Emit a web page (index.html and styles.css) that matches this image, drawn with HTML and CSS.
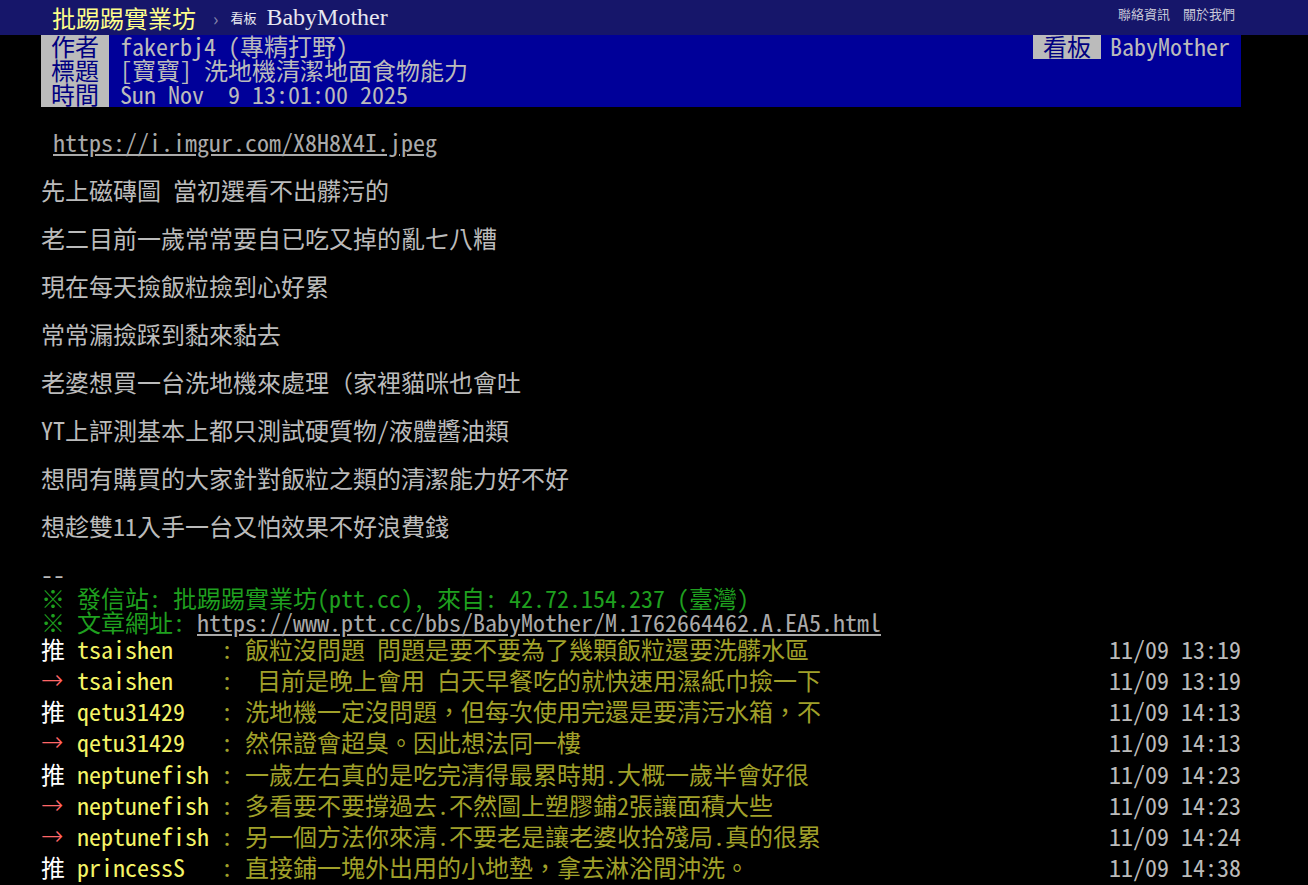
FILE: index.html
```html
<!DOCTYPE html>
<html lang="zh-Hant-TW">
<head>
    <meta charset="UTF-8">
    <title>[寶寶] 洗地機清潔地面食物能力 - 看板 BabyMother - 批踢踢實業坊</title>
    <link rel="stylesheet" href="styles.css">
</head>
<body>

<div class="topbar-container">
    <div class="topbar">
        <a class="logo" href="#">批踢踢實業坊</a>
        <span class="sep">›</span>
        <a class="board" href="#"><span class="board-label">看板</span>BabyMother</a>
        <div class="top-links">
            <a href="#">聯絡資訊</a>
            <a href="#">關於我們</a>
        </div>
    </div>
</div>

<div class="main-content bbs">
    <div class="meta">
        <div class="meta-left">
            <div class="metaline"><span class="meta-tag">作者</span><span class="meta-value">fakerbj4 (專精打野)</span></div>
            <div class="metaline"><span class="meta-tag">標題</span><span class="meta-value">[寶寶] 洗地機清潔地面食物能力</span></div>
            <div class="metaline"><span class="meta-tag">時間</span><span class="meta-value">Sun Nov  9 13:01:00 2025</span></div>
        </div>
        <div class="metaline meta-right"><span class="meta-tag">看板</span><span class="meta-value">BabyMother</span></div>
    </div>

    <div class="article-body"> <a href="#">https://i.imgur.com/X8H8X4I.jpeg</a>

先上磁磚圖 當初選看不出髒污的

老二目前一歲常常要自已吃又掉的亂七八糟

現在每天撿飯粒撿到心好累

常常漏撿踩到黏來黏去

老婆想買一台洗地機來處理（家裡貓咪也會吐

YT上評測基本上都只測試硬質物/液體醬油類

想問有購買的大家針對飯粒之類的清潔能力好不好

想趁雙11入手一台又怕效果不好浪費錢

--
<span class="f2">※ 發信站: 批踢踢實業坊(ptt.cc), 來自: 42.72.154.237 (臺灣)</span>
<span class="f2">※ 文章網址: </span><a href="#">https://www.ptt.cc/bbs/BabyMother/M.1762664462.A.EA5.html</a></div>

    <div class="push"><span class="push-tag">推</span><span class="push-userid">tsaishen</span><span class="push-content">: 飯粒沒問題 問題是要不要為了幾顆飯粒還要洗髒水區</span><span class="push-time">11/09 13:19</span></div>
    <div class="push"><span class="push-tag arrow">→</span><span class="push-userid">tsaishen</span><span class="push-content">:  目前是晚上會用 白天早餐吃的就快速用濕紙巾撿一下</span><span class="push-time">11/09 13:19</span></div>
    <div class="push"><span class="push-tag">推</span><span class="push-userid">qetu31429</span><span class="push-content">: 洗地機一定沒問題，但每次使用完還是要清污水箱，不</span><span class="push-time">11/09 14:13</span></div>
    <div class="push"><span class="push-tag arrow">→</span><span class="push-userid">qetu31429</span><span class="push-content">: 然保證會超臭。因此想法同一樓</span><span class="push-time">11/09 14:13</span></div>
    <div class="push"><span class="push-tag">推</span><span class="push-userid">neptunefish</span><span class="push-content">: 一歲左右真的是吃完清得最累時期.大概一歲半會好很</span><span class="push-time">11/09 14:23</span></div>
    <div class="push"><span class="push-tag arrow">→</span><span class="push-userid">neptunefish</span><span class="push-content">: 多看要不要撐過去.不然圖上塑膠鋪2張讓面積大些</span><span class="push-time">11/09 14:23</span></div>
    <div class="push"><span class="push-tag arrow">→</span><span class="push-userid">neptunefish</span><span class="push-content">: 另一個方法你來清.不要老是讓老婆收拾殘局.真的很累</span><span class="push-time">11/09 14:24</span></div>
    <div class="push"><span class="push-tag">推</span><span class="push-userid">princessS</span><span class="push-content">: 直接鋪一塊外出用的小地墊，拿去淋浴間沖洗。</span><span class="push-time">11/09 14:38</span></div>
</div>

</body>
</html>
```
FILE: styles.css
```css
body {
    background-color: #000;
    color: #bbb;
    margin: 0;
    font-family: "Noto Sans CJK TC", sans-serif;
}

a {
    color: inherit;
}

.topbar-container {
    background-color: #16166a;
    height: 35px;
}

.topbar {
    width: 1200px;
    margin-left: 41px;
    height: 35px;
    display: flex;
    align-items: center;
    padding-left: 11px;
    box-sizing: border-box;
}

.topbar a {
    text-decoration: none;
}

.logo {
    color: #ffff8a;
    font-size: 24px;
    line-height: 35px;
}

.sep {
    color: #8888aa;
    font-size: 18px;
    margin: 0 12px 0 17px;
}

.board {
    color: #e8e8f0;
    font-family: "Liberation Serif", serif;
    font-size: 24px;
    display: flex;
    align-items: center;
}

.board-label {
    font-family: "Noto Sans CJK TC", sans-serif;
    font-size: 13px;
    margin-right: 10px;
}

.top-links {
    margin-left: auto;
    margin-right: 6px;
    display: flex;
    gap: 13px;
    font-size: 13px;
    align-self: flex-start;
    margin-top: 4px;
}

.top-links a {
    color: #c8c8d8;
}

/* article */

.bbs {
    font-family: "Noto Sans Mono CJK TC", "Noto Sans CJK TC", monospace;
    font-size: 24px;
    line-height: 24px;
}

.main-content {
    width: 1200px;
    margin-left: 41px;
}

.meta {
    background-color: #000099;
    display: flex;
    justify-content: space-between;
    align-items: flex-start;
}

.metaline {
    display: flex;
    height: 24px;
    line-height: 21px;
    white-space: pre;
}

.meta-tag {
    background-color: #bbb;
    color: #000080;
    padding: 0 10px;
}

.meta-value {
    color: #bbb;
    padding-left: 11px;
}

.meta-right .meta-value {
    padding: 0 11px 0 9px;
}

.article-body {
    white-space: pre-wrap;
    padding-top: 23px;
    margin-bottom: 1px;
}

.article-body a {
    color: #aaa;
}

.f2 {
    color: #1f9f1f;
}

.push {
    display: flex;
    height: 31.14px;
    line-height: 27px;
    white-space: pre;
}

.push-tag {
    width: 36px;
    color: #fff;
}

.push-tag.arrow {
    color: #f66;
    font-family: "DejaVu Sans", sans-serif;
    font-weight: 200;
    font-size: 27px;
}

.push-userid {
    width: 144px;
    color: #f4f466;
}

.push-content {
    color: #a0a02a;
}

.push-time {
    margin-left: auto;
    color: #bbb;
}
```
